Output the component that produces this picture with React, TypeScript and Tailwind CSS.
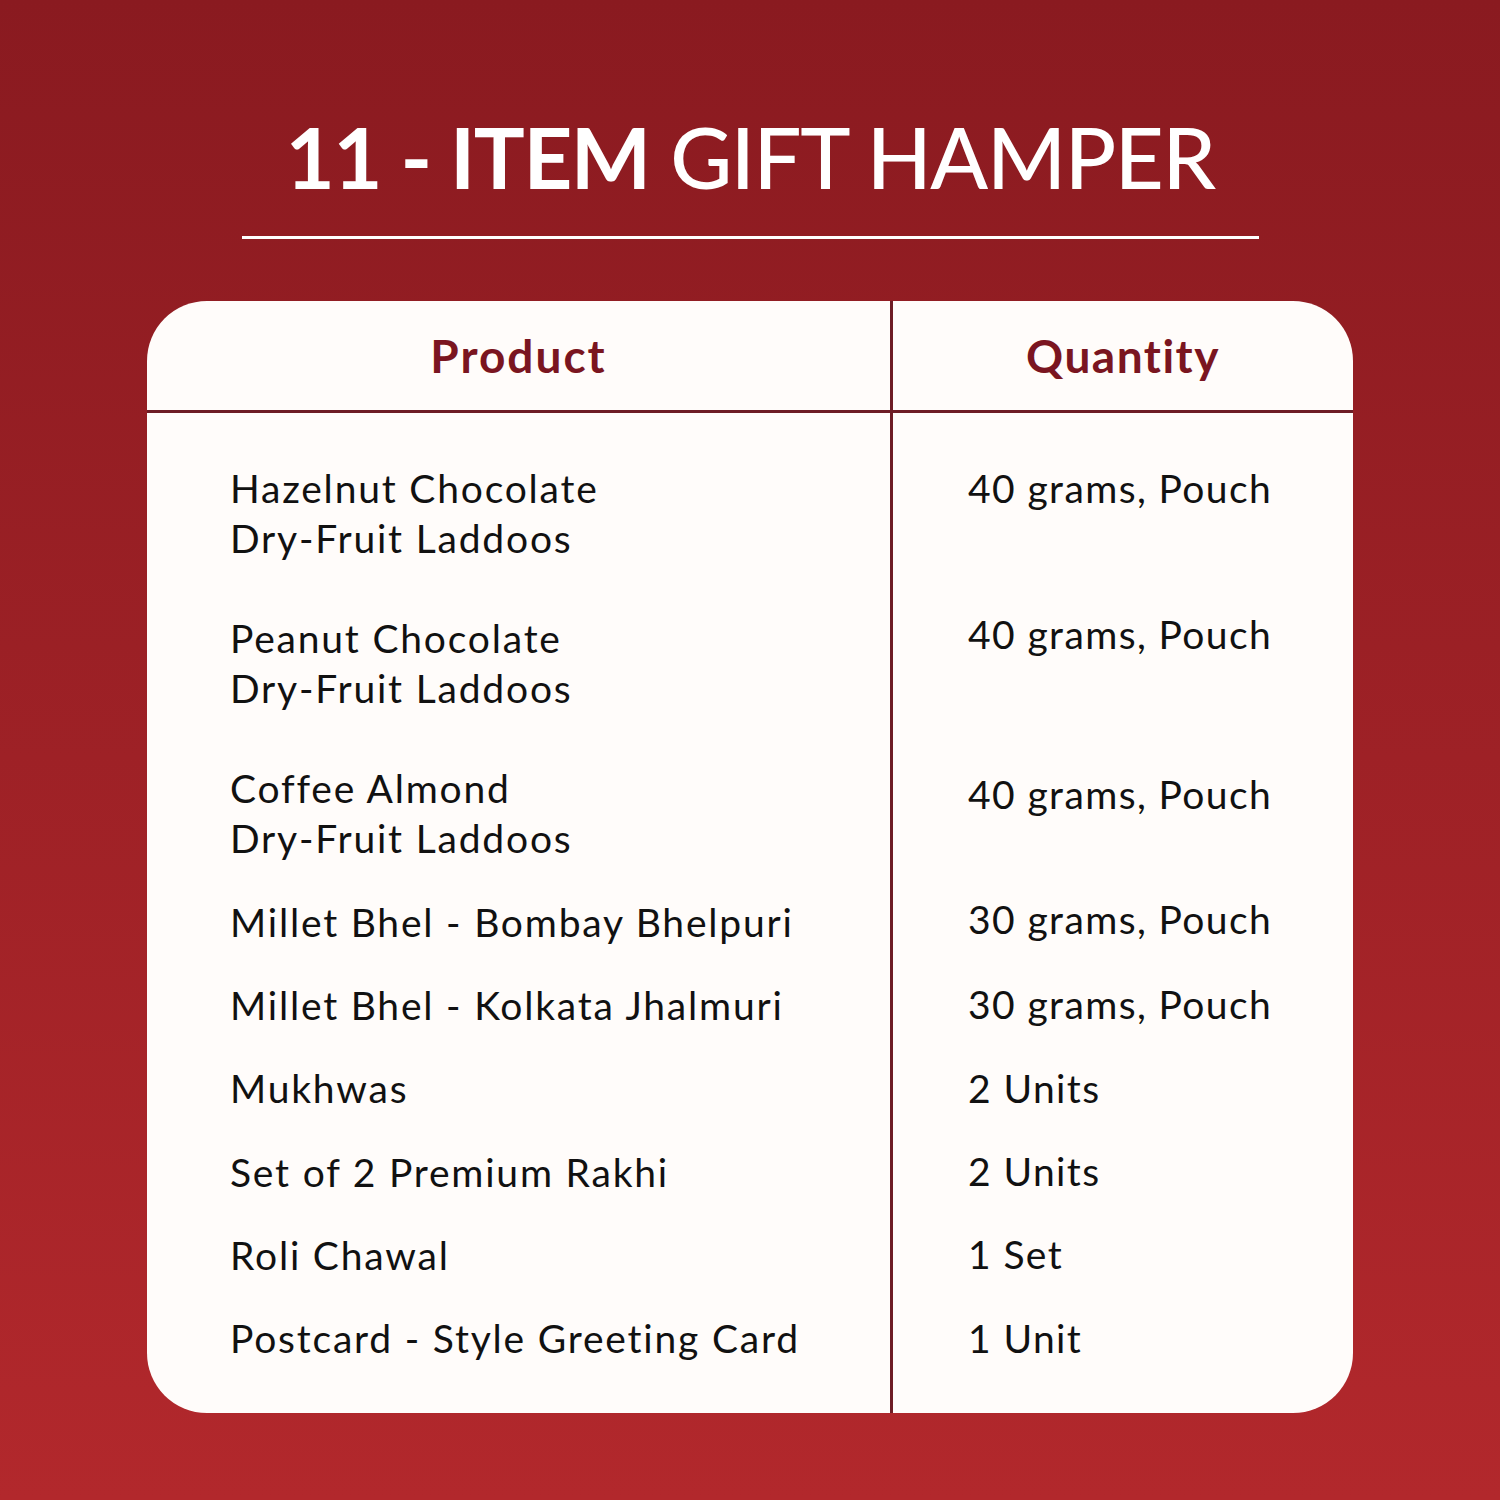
const rows = [
  { product: ["Hazelnut Chocolate", "Dry-Fruit Laddoos"], qty: "40 grams, Pouch", pad: "pb-[50px]", q: "mt-0" },
  { product: ["Peanut Chocolate", "Dry-Fruit Laddoos"], qty: "40 grams, Pouch", pad: "pb-[50px]", q: "mt-[-4px]" },
  { product: ["Coffee Almond", "Dry-Fruit Laddoos"], qty: "40 grams, Pouch", pad: "pb-[34px]", q: "mt-[6px]" },
  { product: ["Millet Bhel - Bombay Bhelpuri"], qty: "30 grams, Pouch", pad: "pb-[33px]", q: "mt-[-3px]" },
  { product: ["Millet Bhel - Kolkata Jhalmuri"], qty: "30 grams, Pouch", pad: "pb-[33px]", q: "mt-[-1px]" },
  { product: ["Mukhwas"], qty: "2 Units", pad: "pb-[34px]", q: "mt-0" },
  { product: ["Set of 2 Premium Rakhi"], qty: "2 Units", pad: "pb-[33px]", q: "mt-[-1px]" },
  { product: ["Roli Chawal"], qty: "1 Set", pad: "pb-[33px]", q: "mt-[-1px]" },
  { product: ["Postcard - Style Greeting Card"], qty: "1 Unit", pad: "pb-[50px]", q: "mt-0" },
];

export default function App() {
  return (
    <div className="w-[1500px] h-[1500px] bg-gradient-to-b from-[#8a1a20] to-[#b2282c] flex flex-col items-center font-['Lato',sans-serif]">
      <h1 className="mt-[106px] h-[100px] text-[85px] leading-[100px] text-white tracking-[-1.4px]">
        <span className="font-bold">11 - ITEM</span> <span className="font-medium">GIFT HAMPER</span>
      </h1>
      <div className="mt-[30px] w-[1017px] h-[3px] bg-white" />

      <div className="mt-[62px] w-[1206px] rounded-[60px] bg-[#fffcfa] overflow-hidden grid grid-cols-[746px_460px]">
        <div className="h-[112px] border-r-[3px] border-b-[3px] border-[#6e1d25] flex items-center justify-center text-[46px] tracking-[2px] font-bold text-[#7a1520]">
          Product
        </div>
        <div className="h-[112px] border-b-[3px] border-[#6e1d25] flex items-center justify-center text-[46px] tracking-[1.5px] font-bold text-[#7a1520]">
          Quantity
        </div>

        {rows.map((r, i) => (
          <div key={i} className="contents">
            <div className={`border-r-[3px] border-[#6e1d25] pl-[83px] ${r.pad} ${i === 0 ? "pt-[50px]" : ""}`}>
              {r.product.map((line) => (
                <div key={line} className="text-[39px] leading-[50px] tracking-[1.8px] text-[#111]">
                  {line}
                </div>
              ))}
            </div>
            <div className={`pl-[75px] ${r.pad} ${i === 0 ? "pt-[50px]" : ""}`}>
              <div className={`text-[39px] leading-[50px] tracking-[1.4px] text-[#111] ${r.q}`}>{r.qty}</div>
            </div>
          </div>
        ))}
      </div>
    </div>
  );
}
